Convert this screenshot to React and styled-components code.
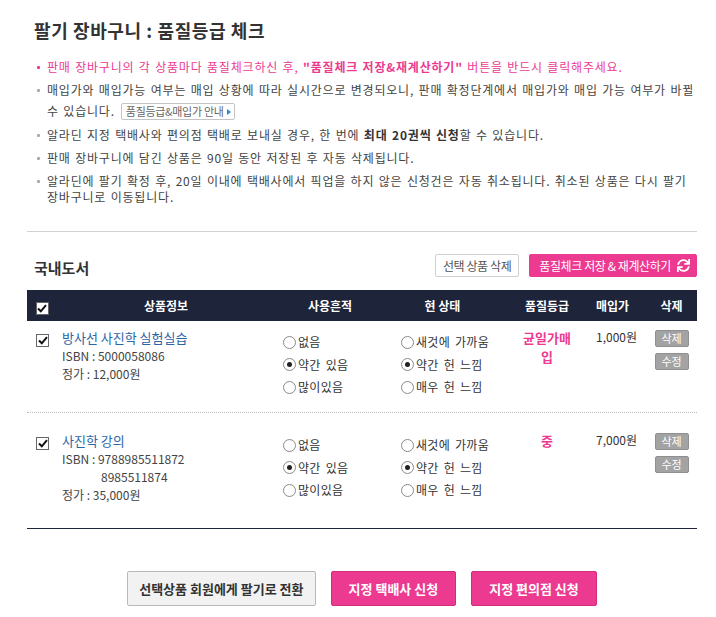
import React from "react"
import styled, { createGlobalStyle } from "styled-components"
import { FaSync } from "react-icons/fa"

const GlobalStyle = createGlobalStyle`
  body {
    margin: 0;
    background: #fff;
    font-family: "Noto Sans CJK KR", "Noto Sans", sans-serif;
    color: #444;
  }
`

const PINK = "#ec3a91"
const NAVY = "#1e243a"

const Page = styled.div`
  width: 670px;
  padding: 17px 19px 12px 27px;
`
const Title = styled.h2`
  margin: 0 0 0 7px;
  font-size: 18px;
  line-height: 26px;
  font-weight: 700;
  color: #333;
  letter-spacing: 0.6px;
`
const Notice = styled.ul`
  list-style: none;
  margin: 16px -6px 0 0;
  padding: 0 0 0 20px;
`
const NoticeItem = styled.li`
  position: relative;
  font-size: 12px;
  line-height: 16px;
  margin-bottom: 7px;
  color: ${props => (props.$pink ? PINK : "#444")};
  letter-spacing: 0.8px;
  word-spacing: 1px;
  word-break: keep-all;
  &::before {
    content: "";
    position: absolute;
    left: -10px;
    top: 7px;
    width: 3px;
    height: 3px;
    border-radius: 1px;
    background: ${props => (props.$pink ? PINK : "#aaa")};
  }
  b {
    font-weight: 700;
    color: ${props => (props.$pink ? PINK : "#333")};
  }
`
const GuideButton = styled.span`
  display: inline-flex;
  align-items: center;
  gap: 3px;
  height: 15px;
  margin: 5px 0 0 6px;
  padding: 0 3px 0 4px;
  border: 1px solid #c4c4c4;
  border-radius: 2px;
  font-size: 11px;
  line-height: 15px;
  color: #666;
  vertical-align: baseline;
  word-spacing: 0;
  letter-spacing: -0.3px;
  &::after {
    content: "";
    border-left: 4px solid #1f8ad6;
    border-top: 3px solid transparent;
    border-bottom: 3px solid transparent;
  }
`
const Divider = styled.hr`
  margin: 26px 0 0;
  border: 0;
  border-top: 1px solid #d2d2d2;
`
const SectionBar = styled.div`
  display: flex;
  align-items: center;
  margin-top: 22px;
  height: 23px;
`
const SectionTitle = styled.h3`
  margin: 4px 0 0 7px;
  font-size: 15px;
  font-weight: 700;
  color: #333;
  flex: 1;
`
const SmallButton = styled.button`
  display: inline-flex;
  align-items: center;
  gap: 6px;
  height: 23px;
  margin-left: 10px;
  padding: 0 ${props => (props.$primary ? "6px 0 9px" : "7px")};
  border: 1px solid ${props => (props.$primary ? PINK : "#d0d0d0")};
  border-radius: 2px;
  background: ${props => (props.$primary ? PINK : "#fff")};
  color: ${props => (props.$primary ? "#fff" : "#555")};
  font-family: inherit;
  font-size: 12px;
  letter-spacing: -0.4px;
  cursor: pointer;
`
const Table = styled.div`
  margin-top: 13px;
  border-bottom: 1px solid ${NAVY};
`
const Grid = styled.div`
  display: grid;
  grid-template-columns: 30px 218px 110px 115px 94px 52px 51px;
`
const HeadRow = styled(Grid)`
  height: 31px;
  align-items: center;
  background: ${NAVY};
  color: #fff;
  font-size: 12px;
  font-weight: 700;
`
const HeadCell = styled.div`
  text-align: ${props => props.$align || "center"};
  padding-left: ${props => props.$pl || 0}px;
`
const Row = styled(Grid)`
  padding: ${props => props.$pad};
  border-top: ${props => (props.$dotted ? "1px dotted #bdbdbd" : "0")};
  font-size: 12px;
  line-height: 18px;
`
const Cell = styled.div`
  padding-left: ${props => props.$pl || 0}px;
  text-align: ${props => props.$align || "left"};
`
const Box = styled.span`
  display: inline-flex;
  align-items: center;
  justify-content: center;
  width: 11px;
  height: 11px;
  margin: ${props => props.$m || "0"};
  border: 1px solid #666;
  background: #fff;
  vertical-align: middle;
`
const ProductName = styled.a`
  display: block;
  color: #2b64a8;
  font-size: 13px;
  line-height: 19px;
  text-decoration: none;
`
const Meta = styled.div`
  color: #444;
  line-height: 18px;
  padding-left: ${props => props.$indent || 0}px;
`
const RadioList = styled.div`
  display: flex;
  flex-direction: column;
  gap: 4.5px;
  margin-top: 5px;
`
const RadioLabel = styled.label`
  display: flex;
  align-items: center;
  gap: 2px;
  height: 18px;
  color: #333;
  font-size: 12px;
  word-spacing: 2px;
  letter-spacing: 0.3px;
`
const Circle = styled.span`
  position: relative;
  width: 11px;
  height: 11px;
  border: 1px solid #8a8a8a;
  border-radius: 50%;
  background: #fff;
  &::after {
    content: "";
    display: ${props => (props.$on ? "block" : "none")};
    position: absolute;
    left: 3px;
    top: 3px;
    width: 5px;
    height: 5px;
    border-radius: 50%;
    background: #222;
  }
`
const Grade = styled.div`
  width: 54px;
  margin: 0 auto;
  color: ${PINK};
  font-size: 13px;
  font-weight: 700;
  line-height: 19px;
  text-align: center;
`
const Price = styled.div`
  padding-left: 2px;
  color: #333;
`
const Actions = styled.div`
  display: flex;
  flex-direction: column;
  align-items: center;
  gap: 6px;
  padding-top: 2px;
`
const GrayButton = styled.button`
  width: 34px;
  height: 17px;
  padding: 0;
  border: 1px solid #8f8f8f;
  border-radius: 2px;
  background: #a3a3a3;
  color: #fff;
  font-family: inherit;
  font-size: 11px;
  line-height: 15px;
  cursor: pointer;
`
const Footer = styled.div`
  display: flex;
  justify-content: center;
  gap: 15px;
  margin-top: 42px;
`
const BigButton = styled.button`
  height: 35px;
  padding: 0 ${props => props.$px || 20}px;
  border: 1px solid ${props => (props.$primary ? "#d42b7c" : "#b9b9b9")};
  border-radius: 2px;
  background: ${props => (props.$primary ? PINK : "#f2f2f2")};
  color: ${props => (props.$primary ? "#fff" : "#333")};
  font-family: inherit;
  font-size: 13px;
  font-weight: 700;
  cursor: pointer;
`

const Check = ({ m }) => (
  <Box $m={m}>
    <svg width="10" height="9" viewBox="0 0 10 9">
      <path d="M1 4.5 L3.8 7.3 L9 1.2" fill="none" stroke="#111" strokeWidth="2" />
    </svg>
  </Box>
)

const Radios = ({ options, selected }) => (
  <RadioList>
    {options.map((o, i) => (
      <RadioLabel key={o}>
        <Circle $on={i === selected} />
        {o}
      </RadioLabel>
    ))}
  </RadioList>
)

const items = [
  {
    name: "방사선 사진학 실험실습",
    isbn: ["5000058086"],
    price: "12,000원",
    grade: "균일가매입",
    buy: "1,000원",
    pad: "7px 0 16px",
  },
  {
    name: "사진학 강의",
    isbn: ["9788985511872", "8985511874"],
    price: "35,000원",
    grade: "중",
    buy: "7,000원",
    pad: "18px 0 24px",
  },
]

export default function App() {
  return (
    <Page>
      <GlobalStyle />
      <Title>팔기 장바구니 : 품질등급 체크</Title>
      <Notice>
        <NoticeItem $pink>
          판매 장바구니의 각 상품마다 품질체크하신 후, <b>"품질체크 저장&재계산하기"</b> 버튼을 반드시 클릭해주세요.
        </NoticeItem>
        <NoticeItem>
          매입가와 매입가능 여부는 매입 상황에 따라 실시간으로 변경되오니, 판매 확정단계에서 매입가와 매입 가능 여부가 바뀔 수 있습니다.
          <GuideButton>품질등급&amp;매입가 안내</GuideButton>
        </NoticeItem>
        <NoticeItem>
          알라딘 지정 택배사와 편의점 택배로 보내실 경우, 한 번에 <b>최대 20권씩 신청</b>할 수 있습니다.
        </NoticeItem>
        <NoticeItem>판매 장바구니에 담긴 상품은 90일 동안 저장된 후 자동 삭제됩니다.</NoticeItem>
        <NoticeItem>
          알라딘에 팔기 확정 후, 20일 이내에 택배사에서 픽업을 하지 않은 신청건은 자동 취소됩니다. 취소된 상품은 다시 팔기 장바구니로 이동됩니다.
        </NoticeItem>
      </Notice>
      <Divider />
      <SectionBar>
        <SectionTitle>국내도서</SectionTitle>
        <SmallButton>선택 상품 삭제</SmallButton>
        <SmallButton $primary>
          품질체크 저장 &amp; 재계산하기 <FaSync size={13} />
        </SmallButton>
      </SectionBar>
      <Table>
        <HeadRow>
          <HeadCell>
            <Check m="4px 0 0 0" />
          </HeadCell>
          <HeadCell>상품정보</HeadCell>
          <HeadCell>사용흔적</HeadCell>
          <HeadCell>현 상태</HeadCell>
          <HeadCell>품질등급</HeadCell>
          <HeadCell $align="left" $pl={2}>매입가</HeadCell>
          <HeadCell>삭제</HeadCell>
        </HeadRow>
        {items.map((it, idx) => (
          <Row key={it.name} $pad={it.pad} $dotted={idx > 0}>
            <Cell $pl={9}>
              <Check m="4px 0 0 0" />
            </Cell>
            <Cell $pl={5}>
              <ProductName href="#">{it.name}</ProductName>
              <Meta>ISBN : {it.isbn[0]}</Meta>
              {it.isbn.slice(1).map(n => (
                <Meta key={n} $indent={39}>{n}</Meta>
              ))}
              <Meta>정가 : {it.price}</Meta>
            </Cell>
            <Cell $pl={8}>
              <Radios options={["없음", "약간 있음", "많이있음"]} selected={1} />
            </Cell>
            <Cell $pl={16}>
              <Radios options={["새것에 가까움", "약간 헌 느낌", "매우 헌 느낌"]} selected={1} />
            </Cell>
            <Cell>
              <Grade>{it.grade}</Grade>
            </Cell>
            <Cell>
              <Price>{it.buy}</Price>
            </Cell>
            <Cell>
              <Actions>
                <GrayButton>삭제</GrayButton>
                <GrayButton>수정</GrayButton>
              </Actions>
            </Cell>
          </Row>
        ))}
      </Table>
      <Footer>
        <BigButton $px={11}>선택상품 회원에게 팔기로 전환</BigButton>
        <BigButton $primary $px={17}>지정 택배사 신청</BigButton>
        <BigButton $primary $px={17}>지정 편의점 신청</BigButton>
      </Footer>
    </Page>
  )
}
